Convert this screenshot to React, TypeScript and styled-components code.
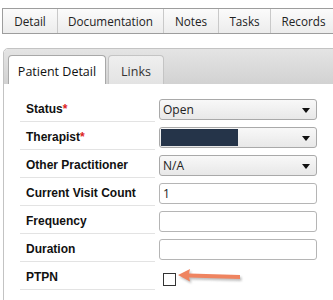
import React from "react";
import styled, { createGlobalStyle } from "styled-components";

const Global = createGlobalStyle`
  html, body { margin: 0; padding: 0; background: #fff; overflow: hidden; }
  body { font-family: "Open Sans", "Liberation Sans", sans-serif; }
`;

const Page = styled.div`
  width: 333px;
  height: 300px;
  padding: 8px 0 0 2px;
  box-sizing: border-box;
  overflow: hidden;
`;

const TopBar = styled.div`
  display: flex;
  height: 26px;
  box-sizing: border-box;
  border: 1px solid #9d9d9d;
  border-right: none;
  background: linear-gradient(#fbfbfb, #ececec);
  width: 340px;
`;

const TopTab = styled.div<{ $w: number }>`
  width: ${(p) => p.$w}px;
  flex: none;
  display: flex;
  align-items: center;
  justify-content: center;
  border-right: 1px solid #c9c9c9;
  font-size: 11.7px;
  color: #222;
  box-sizing: border-box;
`;

const Panel = styled.div`
  margin-top: 14px;
  margin-left: 1px;
  width: 345px;
  height: 260px;
  border: 1px solid #c3c3c3;
  border-radius: 5px 0 0 0;
  box-sizing: border-box;
  overflow: hidden;
`;

const TabStrip = styled.div`
  display: flex;
  align-items: flex-end;
  gap: 2px;
  height: 35px;
  padding-left: 4px;
  box-sizing: border-box;
  background: linear-gradient(#e4e4e4, #d2d2d2);
  border-radius: 4px 0 0 0;
`;

const InnerTab = styled.div<{ $active?: boolean; $w: number }>`
  width: ${(p) => p.$w}px;
  height: 29px;
  box-sizing: border-box;
  display: flex;
  align-items: center;
  justify-content: center;
  font-size: 12.5px;
  color: ${(p) => (p.$active ? "#111" : "#333")};
  background: ${(p) => (p.$active ? "#fff" : "linear-gradient(#efefef, #e3e3e3)")};
  border: 1px solid ${(p) => (p.$active ? "#a8a8a8" : "#c4c4c4")};
  border-bottom: none;
  border-radius: 4px 4px 0 0;
  padding-top: 2px;
`;

const Form = styled.div`
  display: grid;
  grid-template-columns: 135px 158px;
  column-gap: 4px;
  padding: 10px 0 0 16px;
`;

const Label = styled.div`
  height: 28px;
  box-sizing: border-box;
  border-bottom: 1px solid #e3e3e3;
  display: flex;
  align-items: center;
  padding: 2px 0 0 6px;
  font-family: "Liberation Sans", Arial, sans-serif;
  font-weight: bold;
  font-size: 12px;
  color: #111;
`;

const Req = styled.span`
  color: #d22;
`;

const Cell = styled.div`
  height: 28px;
  box-sizing: border-box;
  display: flex;
  align-items: center;
  padding-top: 3px;
  position: relative;
`;

const Select = styled.div`
  width: 100%;
  height: 21px;
  box-sizing: border-box;
  border: 1px solid #a9a9a9;
  border-radius: 3px;
  background: linear-gradient(#f8f8f8, #e8e8e8);
  display: flex;
  align-items: center;
  padding: 0 6px 0 2px;
  font-size: 12px;
  color: #222;
  position: relative;
`;

const SelectText = styled.span`
  flex: 1;
  padding-left: 1px;
`;

const Redacted = styled.div`
  width: 77px;
  height: 17px;
  background: #253449;
  margin-left: -1px;
  flex: none;
`;

const Spacer = styled.div`
  flex: 1;
`;

const Caret = styled.div`
  width: 0;
  height: 0;
  border-left: 4px solid transparent;
  border-right: 4px solid transparent;
  border-top: 5px solid #111;
  margin-top: 1px;
`;

const TextInput = styled.div`
  width: 100%;
  height: 21px;
  box-sizing: border-box;
  border: 1px solid #b5b5b5;
  border-radius: 3px;
  background: #fff;
  display: flex;
  align-items: center;
  padding-left: 3px;
  font-size: 12px;
  color: #222;
`;

const CheckBox = styled.div`
  width: 13px;
  height: 13px;
  box-sizing: border-box;
  border: 1px solid #333;
  background: #fff;
  margin-left: 4px;
  margin-top: 3px;
`;

const Arrow = styled.svg`
  position: absolute;
  left: 18px;
  top: 6px;
  overflow: visible;
`;

const fields: { label: string; req?: boolean; kind: string; value?: string }[] = [
  { label: "Status", req: true, kind: "select", value: "Open" },
  { label: "Therapist", req: true, kind: "redacted" },
  { label: "Other Practitioner", kind: "select", value: "N/A" },
  { label: "Current Visit Count", kind: "input", value: "1" },
  { label: "Frequency", kind: "input", value: "" },
  { label: "Duration", kind: "input", value: "" },
  { label: "PTPN", kind: "check" },
];

export default function App() {
  return (
    <>
      <Global />
      <Page>
        <TopBar>
          <TopTab $w={55}>Detail</TopTab>
          <TopTab $w={106}>Documentation</TopTab>
          <TopTab $w={55}>Notes</TopTab>
          <TopTab $w={52}>Tasks</TopTab>
          <TopTab $w={66}>Records</TopTab>
        </TopBar>
        <Panel>
          <TabStrip>
            <InnerTab $active $w={98}>Patient Detail</InnerTab>
            <InnerTab $w={56}>Links</InnerTab>
          </TabStrip>
          <Form>
            {fields.map((f) => (
              <React.Fragment key={f.label}>
                <Label>
                  {f.label}
                  {f.req && <Req>*</Req>}
                </Label>
                <Cell>
                  {f.kind === "select" && (
                    <Select>
                      <SelectText>{f.value}</SelectText>
                      <Caret />
                    </Select>
                  )}
                  {f.kind === "redacted" && (
                    <Select>
                      <Redacted />
                      <Spacer />
                      <Caret />
                    </Select>
                  )}
                  {f.kind === "input" && <TextInput>{f.value}</TextInput>}
                  {f.kind === "check" && (
                    <>
                      <CheckBox />
                      <Arrow width="64" height="16" viewBox="0 0 64 16">
                        <defs>
                          <filter id="sh" x="-20%" y="-50%" width="140%" height="200%">
                            <feGaussianBlur stdDeviation="1.2" />
                          </filter>
                        </defs>
                        <g transform="translate(1.5,2)" fill="#8a8a8a" opacity="0.55" filter="url(#sh)">
                          <polygon points="1,7 13,1 12,5.5 63,7 63,11 12,9.5 13,13.5" />
                        </g>
                        <polygon points="1,7 13,1 12,5.5 63,7 63,11 12,9.5 13,13.5" fill="#ef8460" />
                      </Arrow>
                    </>
                  )}
                </Cell>
              </React.Fragment>
            ))}
          </Form>
        </Panel>
      </Page>
    </>
  );
}
